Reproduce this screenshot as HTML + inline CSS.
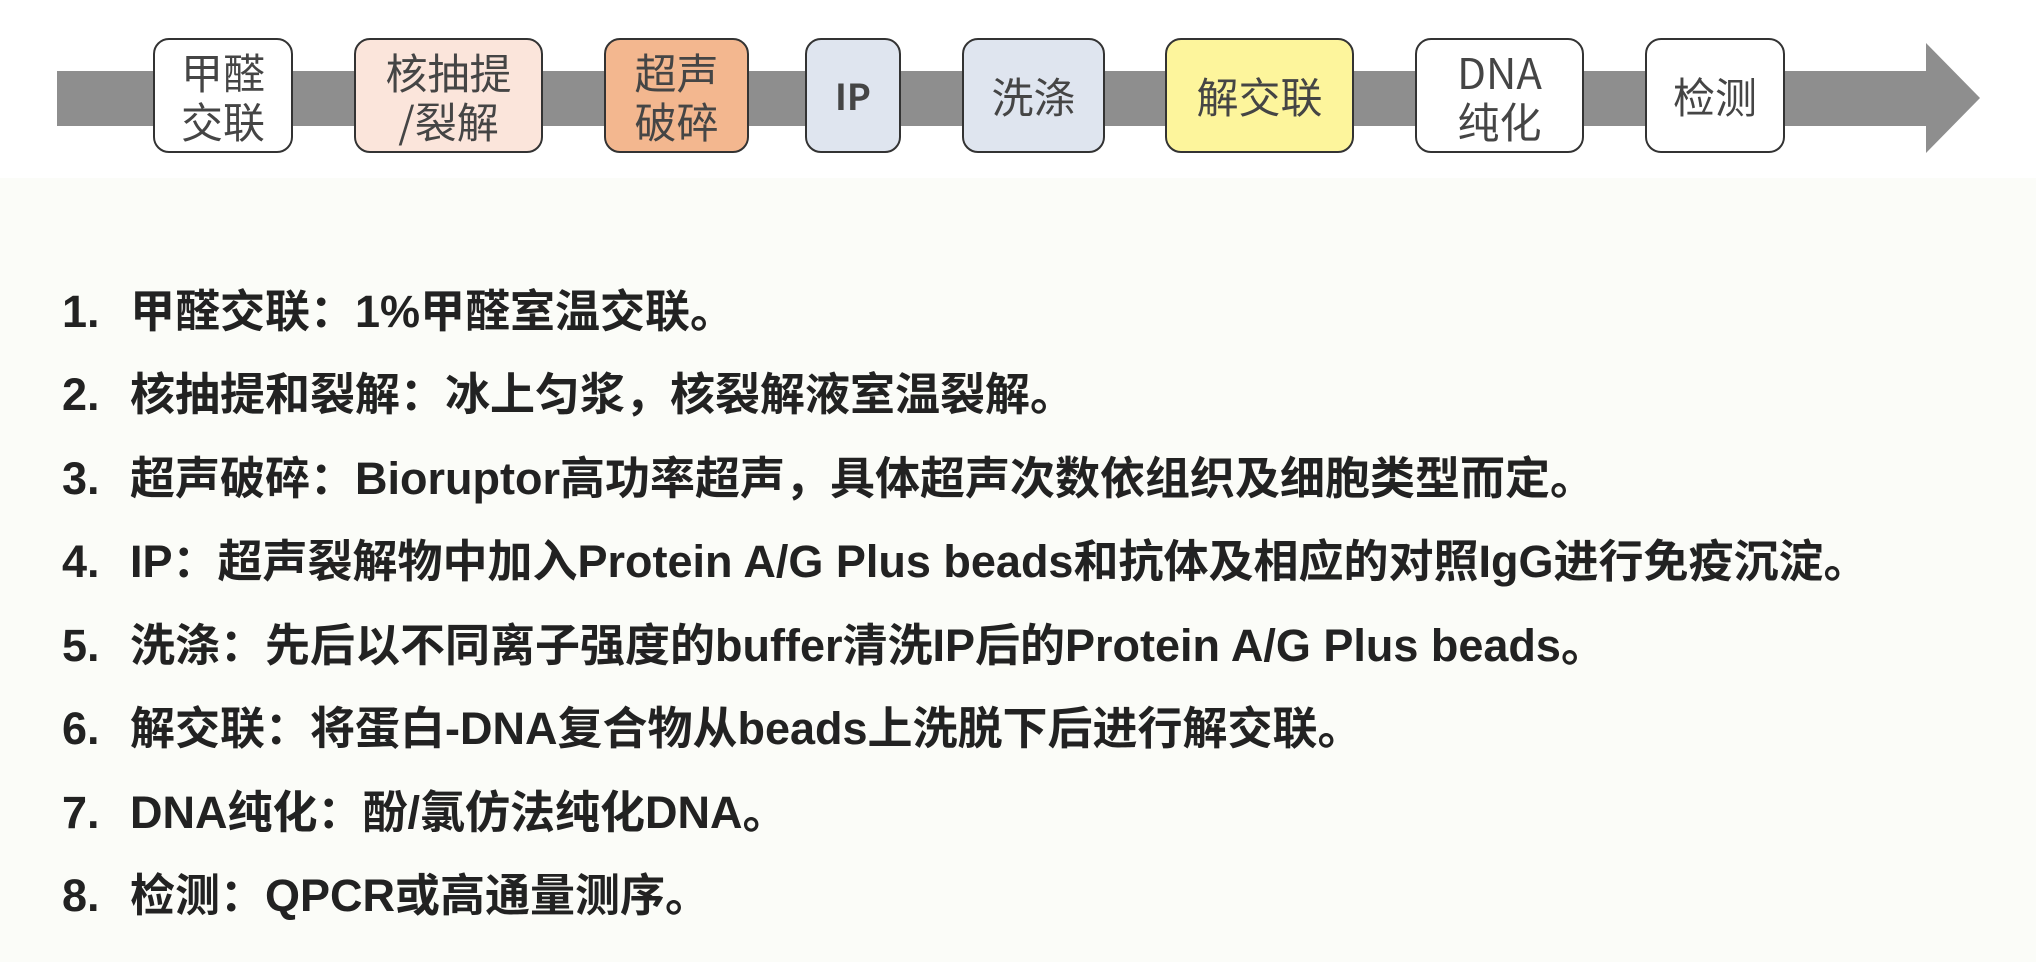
<!DOCTYPE html>
<html><head><meta charset="utf-8"><style>
html,body{margin:0;padding:0}
body{width:2036px;height:962px;position:relative;overflow:hidden;background:#fbfcf8;font-family:"Liberation Sans","Noto Sans CJK SC",sans-serif}
.top{position:absolute;left:0;top:0;width:2036px;height:178px;background:#fff}
.bar{position:absolute;left:57px;top:71px;width:1872px;height:55px;background:#8e8e8e}
.box{position:absolute;top:38px;height:115px;box-sizing:border-box;border:2px solid #333;border-radius:16px;display:flex;align-items:center;justify-content:center;text-align:center;font-family:"Noto Sans CJK SC",sans-serif;font-size:42px;line-height:49px;color:#454545}
.l{position:absolute;left:62px;font-size:45px;font-weight:bold;color:#222;white-space:nowrap;font-family:"Liberation Sans","Noto Sans CJK SC",sans-serif;line-height:48px}
.l span{display:inline-block;width:68px}
</style></head><body>
<div class="top"></div>
<div class="bar"></div>
<svg style="position:absolute;left:0;top:0" width="2036" height="200"><polygon points="1926,43 1980,98 1926,153" fill="#8e8e8e"/></svg>
<div class="box" style="left:153px;width:140px;background:#fff">甲醛<br>交联</div>
<div class="box" style="left:354px;width:189px;background:#fbe5db">核抽提<br>/裂解</div>
<div class="box" style="left:604px;width:145px;background:#f3b78f">超声<br>破碎</div>
<div class="box" style="left:805px;width:96px;background:#dfe5ef;font-weight:bold;font-size:36px">IP</div>
<div class="box" style="left:962px;width:143px;background:#dfe5ef">洗涤</div>
<div class="box" style="left:1165px;width:189px;background:#fdf59c">解交联</div>
<div class="box" style="left:1415px;width:169px;background:#fff">DNA<br>纯化</div>
<div class="box" style="left:1645px;width:140px;background:#fff">检测</div>

<div class="l" style="top:288px"><span>1.</span>甲醛交联：1%甲醛室温交联。</div>
<div class="l" style="top:371px"><span>2.</span>核抽提和裂解：冰上匀浆，核裂解液室温裂解。</div>
<div class="l" style="top:455px"><span>3.</span>超声破碎：Bioruptor高功率超声，具体超声次数依组织及细胞类型而定。</div>
<div class="l" style="top:538px"><span>4.</span>IP：超声裂解物中加入Protein A/G Plus beads和抗体及相应的对照IgG进行免疫沉淀。</div>
<div class="l" style="top:622px"><span>5.</span>洗涤：先后以不同离子强度的buffer清洗IP后的Protein A/G Plus beads。</div>
<div class="l" style="top:705px"><span>6.</span>解交联：将蛋白-DNA复合物从beads上洗脱下后进行解交联。</div>
<div class="l" style="top:789px"><span>7.</span>DNA纯化：酚/氯仿法纯化DNA。</div>
<div class="l" style="top:872px"><span>8.</span>检测：QPCR或高通量测序。</div>
</body></html>
